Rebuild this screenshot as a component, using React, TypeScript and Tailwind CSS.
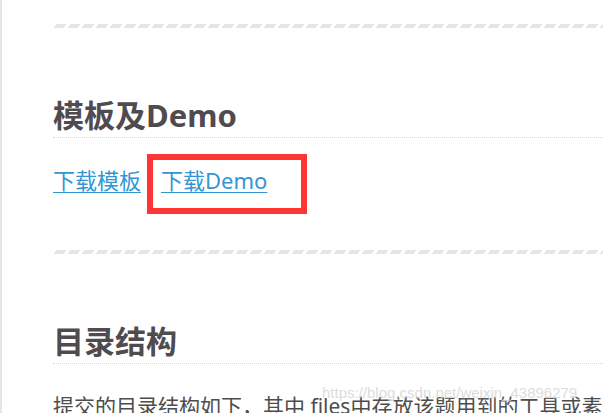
const font = "font-['Noto_Sans','Noto_Sans_CJK_SC',sans-serif]";

function DashRule() {
  // slanted dashes, drawn as skewed bars
  return (
    <div className="flex h-1 gap-1 overflow-hidden pl-[2px]">
      {Array.from({ length: 42 }).map((_, i) => (
        <span key={i} className="h-1 w-2.5 shrink-0 -skew-x-[40deg] bg-[#e3e6e6]" />
      ))}
    </div>
  );
}

export default function App() {
  return (
    <div className={`relative h-[413px] overflow-hidden border-l-2 border-[#e3e6e6] bg-white ${font}`}>
      <div className="pl-[51px] pt-6">
        <DashRule />

        <h2 className="mt-[69px] border-b border-dotted border-[#d9d9d9] pb-1 text-[31px] font-bold leading-[36px] text-[#4f4b4f]">
          模板及Demo
        </h2>

        <div className="relative mt-[27px] flex gap-5 text-[22px] leading-[30px] text-[#3396d3]">
          <a href="#" className="underline decoration-1 underline-offset-[3px]">
            下载模板
          </a>
          <a href="#" className="underline decoration-1 underline-offset-[3px]">
            下载Demo
          </a>
          <div className="pointer-events-none absolute left-[94px] top-[-11px] h-[60px] w-[160px] border-[6px] border-[#ff3535]" />
        </div>

        <div className="mt-[55px]">
          <DashRule />
        </div>

        <h2 className="mt-[69px] border-b border-dotted border-[#d9d9d9] pb-1 text-[31px] font-bold leading-[36px] text-[#4f4b4f]">
          目录结构
        </h2>

        <p className="mt-[27px] whitespace-nowrap text-[21px] leading-[30px] text-[#4d4d4d]">
          提交的目录结构如下，其中 files中存放该题用到的工具或素材，
        </p>
      </div>

      <span className="pointer-events-none absolute left-[320px] top-[382px] font-['Liberation_Sans',sans-serif] text-[15px] text-[#d0d0d0]/75 [text-shadow:0_0_2px_#fff]">
        https://blog.csdn.net/weixin_43896279
      </span>
    </div>
  );
}
